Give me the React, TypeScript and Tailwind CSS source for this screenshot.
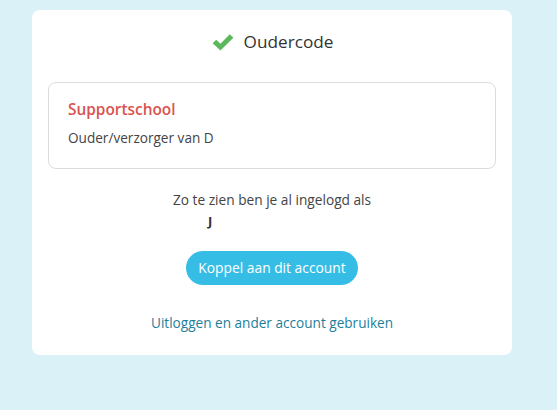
import React from "react";

function CheckIcon() {
  return (
    <svg width="24" height="19" viewBox="0 0 22 18" className="block">
      <path
        d="M1.2 9.6 L4.6 6.3 L8.6 10.2 L17.4 1.2 L20.8 4.5 L8.6 16.6 Z"
        fill="#5cb85c"
      />
    </svg>
  );
}

export default function App() {
  return (
    <div
      className="min-h-[410px] w-[557px] bg-[#daf1f8] pt-[10px] pl-[32px]"
      style={{ fontFamily: '"Open Sans", "DejaVu Sans", sans-serif' }}
    >
      <div className="w-[480px] h-[345px] bg-white rounded-[8px] px-[16px] pt-[20px]">
        <div className="flex items-center justify-center gap-[9px] h-[24px]">
          <CheckIcon />
          <span className="text-[17.2px] text-[#333]">Oudercode</span>
        </div>

        <div className="mt-[28px] h-[87px] border border-[#dcdcdc] rounded-[8px] px-[19px] pt-[17px]">
          <div className="text-[15.4px] font-semibold text-[#d9534f] leading-[20px]">Supportschool</div>
          <div className="mt-[9px] text-[13.6px] text-[#444] leading-[18px]">Ouder/verzorger van D</div>
        </div>

        <div className="mt-[22px] text-center text-[13.7px] text-[#444] leading-[18px]">
          Zo te zien ben je al ingelogd als
        </div>
        <div className="mt-[2px] pl-[160px] text-[13px] font-bold text-[#333] leading-[20px]">J</div>

        <div className="flex justify-center mt-[20px]">
          <button className="h-[34px] px-[12px] rounded-full bg-[#36bde6] text-white text-[13.8px] leading-none">
            Koppel aan dit account
          </button>
        </div>

        <div className="mt-[28px] text-center text-[13.6px] text-[#1e7f9c] leading-[20px]">
          Uitloggen en ander account gebruiken
        </div>
      </div>
    </div>
  );
}
